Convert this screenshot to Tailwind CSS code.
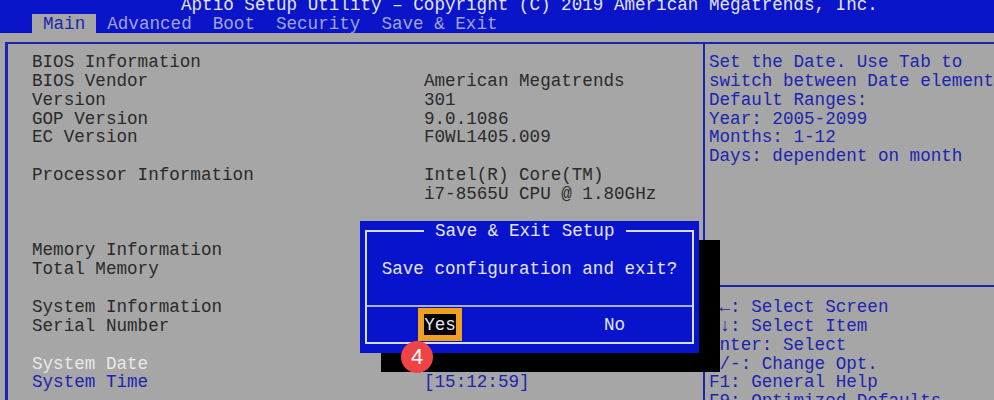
<!DOCTYPE html>
<html lang="en">
<head>
    <title>Aptio Setup Utility</title>
    <meta name="viewport" content="width=device-width, initial-scale=1.0">
    <script src="https://cdn.jsdelivr.net/npm/@tailwindcss/browser@4"></script>
</head>
<body class="bg-[#a6a6a6] h-[400px] overflow-hidden relative font-['Liberation_Mono',monospace] text-[17.6px] leading-[18.85px] text-[#2a2a2a] whitespace-nowrap">
    <!-- Header -->
    <header class="bg-[#0a14c8] h-[33px] text-[#e4e4f0] flex flex-col">
        <div class="pl-[181px] h-[14px] leading-[10px]">Aptio Setup Utility – Copyright (C) 2019 American Megatrends, Inc.</div>
        <nav class="flex pl-[32px] h-[19px] text-[#a0a4d8] leading-[20px]">
            <span class="bg-[#a6a6a6] text-[#1c24b0] px-[11px] mr-[11px]">Main</span>
            <span class="mr-[21px]">Advanced</span>
            <span class="mr-[21px]">Boot</span>
            <span class="mr-[21px]">Security</span>
            <span>Save &amp; Exit</span>
        </nav>
    </header>

    <!-- Main panel -->
    <main class="mt-[9px] ml-[5px] h-[358px] border-l-[3px] border-t-2 border-[#1c24b0] flex">
        <section class="w-[695px] pt-[9px] pl-[24px] grid grid-cols-[392px_1fr] auto-rows-[18.85px]">
            <div>BIOS Information</div><div></div>
            <div>BIOS Vendor</div><div>American Megatrends</div>
            <div>Version</div><div>301</div>
            <div>GOP Version</div><div>9.0.1086</div>
            <div>EC Version</div><div>F0WL1405.009</div>
            <div></div><div></div>
            <div>Processor Information</div><div>Intel(R) Core(TM)</div>
            <div></div><div>i7-8565U CPU @ 1.80GHz</div>
            <div></div><div></div>
            <div></div><div></div>
            <div>Memory Information</div><div></div>
            <div>Total Memory</div><div></div>
            <div></div><div></div>
            <div>System Information</div><div></div>
            <div>Serial Number</div><div></div>
            <div></div><div></div>
            <div class="text-[#e8e8e8]">System Date</div><div></div>
            <div class="text-[#1c24b0]">System Time</div><div class="text-[#1c24b0]">[15:12:59]</div>
        </section>
        <aside class="flex-1 border-l-2 border-[#1c24b0] text-[#1c24b0] flex flex-col overflow-hidden">
            <div class="h-[243px] shrink-0 pt-[9px] pl-[4px] border-b-2 border-[#1c24b0]">
                <div>Set the Date. Use Tab to</div>
                <div>switch between Date elements.</div>
                <div>Default Ranges:</div>
                <div>Year: 2005-2099</div>
                <div>Months: 1-12</div>
                <div>Days: dependent on month</div>
            </div>
            <div class="pt-[11px] pl-[4px]">
                <div>→←: Select Screen</div>
                <div>↑↓: Select Item</div>
                <div>Enter: Select</div>
                <div>+/-: Change Opt.</div>
                <div>F1: General Help</div>
                <div>F9: Optimized Defaults</div>
            </div>
        </aside>
    </main>

    <!-- Dialog -->
    <div class="absolute left-[381px] top-[240px] w-[339px] h-[132px] bg-black"></div>
    <div class="absolute left-[360px] top-[221px] w-[339px] h-[132px] bg-[#0814cc] p-[5px] pt-[9px] text-[#e4e4f0]">
        <div class="relative h-[114px] border-2 border-[#d8dcf0] flex flex-col">
            <div class="absolute -top-[10px] left-[57px] px-[11px] bg-[#0814cc]">Save &amp; Exit Setup</div>
            <div class="h-[75px] pt-[28px] text-center border-b-2 border-[#a8b0e8]">Save configuration and exit?</div>
            <div class="relative flex-1">
                <div class="absolute left-[51px] top-[1px] border-[6px] border-[#f0a020] bg-black w-[44px] h-[33px] text-center leading-[22px]">Yes</div>
                <div class="absolute left-[237px] top-[9px]">No</div>
            </div>
        </div>
    </div>
    <div class="absolute left-[401px] top-[341px] w-[32px] h-[32px] rounded-full bg-[#f04444] text-white text-center font-['Liberation_Sans',sans-serif] text-[22px] leading-[32px]">4</div>
</body>
</html>
